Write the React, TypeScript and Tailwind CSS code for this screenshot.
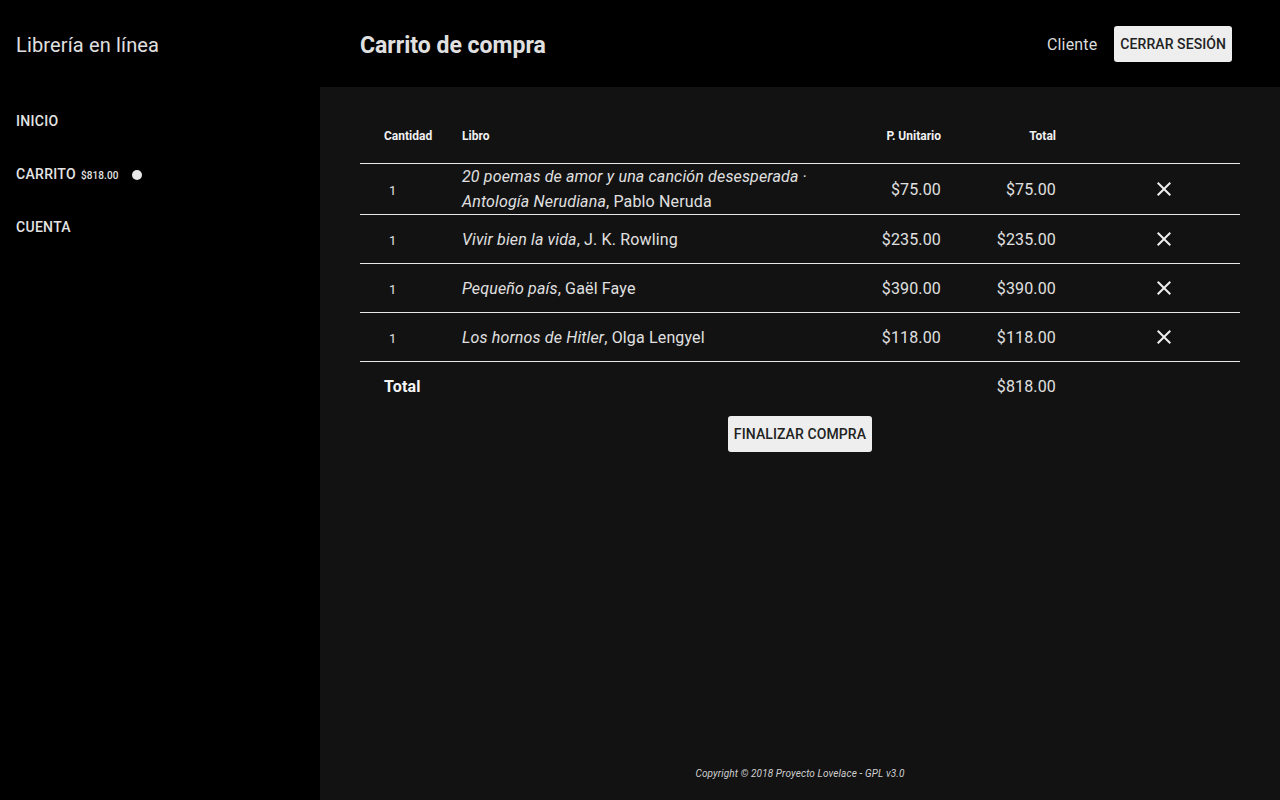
import React from "react";

const CloseIcon = () => (
  <svg width="24" height="24" viewBox="0 0 24 24" fill="#eeeeee">
    <path d="M19 6.41L17.59 5 12 10.59 6.41 5 5 6.41 10.59 12 5 17.59 6.41 19 12 13.41 17.59 19 19 17.59 13.41 12z" />
  </svg>
);

const rows = [
  { title: "20 poemas de amor y una canción desesperada · Antología Nerudiana", author: "Pablo Neruda", price: "$75.00" },
  { title: "Vivir bien la vida", author: "J. K. Rowling", price: "$235.00" },
  { title: "Pequeño país", author: "Gaël Faye", price: "$390.00" },
  { title: "Los hornos de Hitler", author: "Olga Lengyel", price: "$118.00" },
];

const grid = "grid grid-cols-[78px_1fr_100px_115px_184px] pl-[24px] items-center";

export default function App() {
  return (
    <div
      className="flex w-[1280px] h-[800px] bg-black text-[#e0e0e0]"
      style={{ fontFamily: "Roboto, 'Liberation Sans', sans-serif" }}
    >
      <aside className="w-[320px] shrink-0 bg-black flex flex-col">
        <div className="h-[87px] flex items-center pl-4 pt-[3px]">
          <span className="text-[20px] tracking-[0.15px] text-[#e0e0e0]">Librería en línea</span>
        </div>
        <nav className="flex flex-col pl-4 text-[14px] font-medium tracking-[0.3px] uppercase text-[#e4e4e4]">
          <div className="h-[53px] flex items-center mt-[8px]">INICIO</div>
          <div className="h-[53px] flex items-center">
            <span>CARRITO</span>
            <span className="text-[10px] ml-[5px] mt-[2px] tracking-[0.1px]">$818.00</span>
            <span className="w-[10px] h-[10px] rounded-full bg-[#e8e8e8] ml-[13px]" />
          </div>
          <div className="h-[53px] flex items-center">CUENTA</div>
        </nav>
      </aside>
      <div className="flex-1 flex flex-col">
        <header className="h-[87px] bg-black flex items-center pl-[40px] pr-[48px] pt-[2px]">
          <h1 className="text-[23px] font-bold text-[#e0e0e0] flex-1 pt-[3px]">Carrito de compra</h1>
          <span className="text-[16px] tracking-[0.15px] text-[#dcdcdc] mr-[17px]">Cliente</span>
          <button className="h-[36px] px-[6px] rounded-[3px] bg-[#eeeeee] text-[#222] text-[14px] font-medium tracking-[0.08px] -mt-[2px] pt-[2px]">
            CERRAR SESIÓN
          </button>
        </header>
        <main className="flex-1 bg-[#121212] flex flex-col px-[40px] pt-[21px]">
          <div className={`${grid} h-[56px] border-b border-[#e8e8e8] text-[12px] font-bold text-[#f0f0f0]`}>
            <div>Cantidad</div>
            <div>Libro</div>
            <div className="text-right">P. Unitario</div>
            <div className="text-right">Total</div>
            <div />
          </div>
          {rows.map((r, i) => (
            <div key={i} className={`${grid} min-h-[49px] border-b border-[#e8e8e8] text-[16px] leading-[25px] tracking-[0.15px]`}>
              <div className="text-[13px] pl-[5px] pt-[2px]">1</div>
              <div className="pr-[16px]">
                <i>{r.title}</i>, {r.author}
              </div>
              <div className="text-right">{r.price}</div>
              <div className="text-right">{r.price}</div>
              <div className="pl-[96px] flex items-center">
                <CloseIcon />
              </div>
            </div>
          ))}
          <div className={`${grid} h-[49px] text-[16px] tracking-[0.15px]`}>
            <div className="font-bold text-[#f4f4f4]">Total</div>
            <div />
            <div />
            <div className="text-right">$818.00</div>
            <div />
          </div>
          <div className="flex justify-center mt-[5px]">
            <button className="h-[36px] px-[6px] rounded-[3px] bg-[#eeeeee] text-[#222] text-[14px] font-medium tracking-[0.1px]">
              FINALIZAR COMPRA
            </button>
          </div>
          <div className="flex-1" />
          <footer className="text-center text-[10px] tracking-[0.13px] italic text-[#d0d0d0] pb-[19px]">
            Copyright © 2018 Proyecto Lovelace - GPL v3.0
          </footer>
        </main>
      </div>
    </div>
  );
}
